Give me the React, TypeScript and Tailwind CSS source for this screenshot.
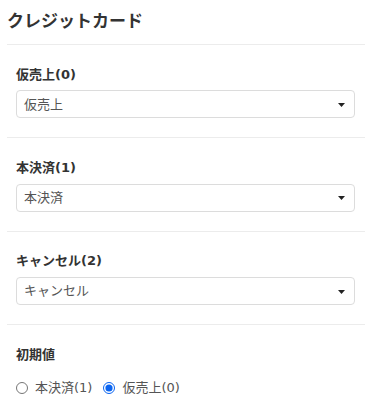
import React from 'react'

const font = { fontFamily: '"DejaVu Sans", "Noto Sans CJK JP", sans-serif' }

function Select({ value }: { value: string }) {
  return (
    <div className="flex h-[28px] items-center justify-between rounded-[4px] border border-[#dcdcdc] bg-white pl-[7px] pr-[9px] text-[13px] text-[#555]">
      <span>{value}</span>
      <svg width="7" height="4" viewBox="0 0 7 4" className="mt-[1px]">
        <path d="M0 0h7L3.5 4z" fill="#222" />
      </svg>
    </div>
  )
}

function Section({ label, value }: { label: string; value: string }) {
  return (
    <div className="border-b border-[#ececec] pb-[19px] pl-[9px] pr-[10px] pt-[20.6px]">
      <div className="mb-[6.8px] text-[13px] font-bold leading-[18px] text-[#333]">{label}</div>
      <Select value={value} />
    </div>
  )
}

export default function App() {
  return (
    <div className="min-h-[416px] bg-white pl-[7px] pr-[5px]" style={font}>
      <div className="border-b border-[#ececec] pb-[10px] pt-[8px]">
        <h1 className="text-[17px] font-bold leading-[26px] text-[#333]">クレジットカード</h1>
      </div>
      <Section label="仮売上(0)" value="仮売上" />
      <Section label="本決済(1)" value="本決済" />
      <Section label="キャンセル(2)" value="キャンセル" />
      <div className="px-[9px] pt-[20.6px]">
        <div className="text-[13px] font-bold leading-[18px] text-[#333]">初期値</div>
        <div className="mt-[14.5px] flex items-center text-[13px] text-[#555]">
          <label className="flex items-center">
            <input type="radio" name="init" className="h-[12px] w-[12px]" />
            <span className="ml-[7px]">本決済(1)</span>
          </label>
          <label className="ml-[11px] flex items-center">
            <input type="radio" name="init" defaultChecked className="h-[12px] w-[12px] accent-[#0a64f0]" />
            <span className="ml-[7px]">仮売上(0)</span>
          </label>
        </div>
      </div>
    </div>
  )
}
